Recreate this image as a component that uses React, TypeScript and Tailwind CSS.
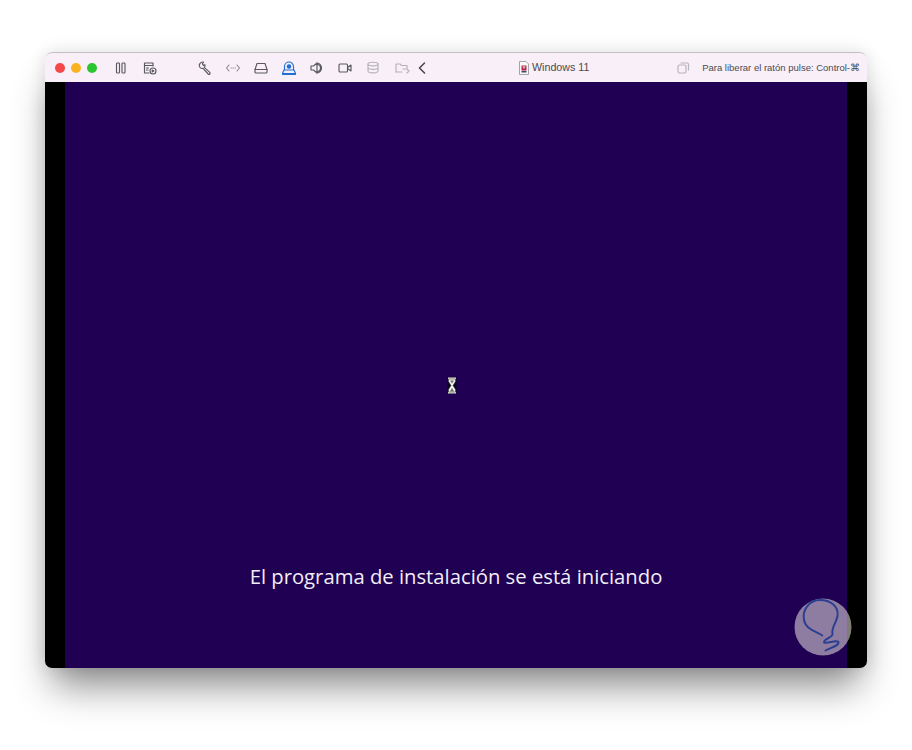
import React from "react";

const Icon = ({ className = "", children, c = "#5a5a5e" }: { className?: string; children: React.ReactNode; c?: string }) => (
  <svg width={16} height={16} viewBox="0 0 16 16" fill="none" stroke={c} strokeWidth={1.15} strokeLinecap="round" strokeLinejoin="round" className={`shrink-0 ${className}`}>
    {children}
  </svg>
);

export default function App() {
  return (
    <div className="w-[912px] h-[750px] bg-white pl-[45px] pt-[52px] overflow-hidden font-['Liberation_Sans',sans-serif]">
      <div className="relative w-[822px] h-[616px] rounded-[7px] shadow-[0_26px_36px_-8px_rgba(0,0,0,0.45),0_0_18px_rgba(0,0,0,0.12)] flex flex-col overflow-hidden">
        <div className="h-[30px] shrink-0 bg-[#f8eff8] border-t border-[#c2bfc2] rounded-t-[7px] flex items-center pl-[10px] pr-[7px]">
          <div className="flex gap-[6px]">
            <span className="w-[10px] h-[10px] rounded-full bg-[#f4484a]" />
            <span className="w-[10px] h-[10px] rounded-full bg-[#f9b320]" />
            <span className="w-[10px] h-[10px] rounded-full bg-[#2ac52f]" />
          </div>
          <div className="flex items-center gap-[13px] ml-[16px]">
            <Icon><rect x="3.5" y="3" width="3" height="10" rx="0.8" /><rect x="9" y="3" width="3" height="10" rx="0.8" /></Icon>
            <Icon><path d="M11 6V3H2.5v10H7" /><path d="M2.5 5.5H11" /><path d="M4.500 8h2M4.500 10h1.500" /><circle cx="11" cy="11" r="3" /><path d="M10.200 10l1.600 1-1.600 1z" fill="#5a5a5e" /></Icon>
          </div>
          <div className="flex items-center gap-[12px] ml-[39px]">
            <Icon><path d="M3 3.500a3 3 0 0 1 3.600-1.300L5.300 3.800l1 1.600 1.700-.6a3 3 0 0 1-.8 2.600l5.600 5a1.100 1.100 0 0 1-1.600 1.600L6 8.400a3 3 0 0 1-3-4.900z" /></Icon>
            <Icon c="#8c8a8e"><path d="M4 5 1.500 8 4 11M12 5l2.500 3L12 11" /><path d="M6 8h.4M8 8h.4M10 8h.4" /></Icon>
            <Icon><path d="M4 3.500h8l2 6v2.500a1 1 0 0 1-1 1H3a1 1 0 0 1-1-1V9.500z" /><path d="M2 9.500h12" /></Icon>
            <Icon c="#1f6fd6"><path d="M3.500 9.500V6.500a4.500 4.500 0 0 1 9 0v3" /><circle cx="8" cy="6.500" r="1.700" fill="#1f6fd6" /><path d="M3 10h10l1.500 3.500h-13z" /><path d="M1.500 14.500h13" /></Icon>
            <Icon><path d="M2 6v4h2.500L8 13V3L4.500 6z" /><path d="M8 4.500a3.500 3.500 0 0 1 0 7M8 3a5 5 0 0 1 4.500 5A5 5 0 0 1 8 13" /></Icon>
            <Icon><rect x="2" y="4" width="8.500" height="8" rx="1" /><path d="m10.500 7.500 3.500-2.500v6l-3.500-2.500" /></Icon>
            <Icon c="#b5b3b7"><ellipse cx="8" cy="4" rx="5" ry="1.800" /><path d="M3 4v7c0 1 2.200 1.800 5 1.800s5-.8 5-1.800V4M3 7.500c0 1 2.200 1.800 5 1.800s5-.8 5-1.800" /></Icon>
            <Icon c="#b5b3b7" className="ml-[1px]"><path d="M2 12V4h4l1.500 1.500H13V8" /><path d="M2 12h6" /><path d="M9 9h4l2 2-2 2" /></Icon>
          </div>
          <Icon c="#444448" className="ml-[4px]"><path d="M10.500 3 5.500 8l5 5" strokeWidth={1.500} /></Icon>
          <div className="flex items-center gap-[3px] ml-[89px]">
            <svg width="10" height="14" viewBox="0 0 10 14" className="shrink-0">
              <path d="M.5.5h6.500l2.500 2.500v10.500H.5z" fill="#fafafa" stroke="#8f8f94" strokeWidth="0.8" />
              <rect x="2.500" y="4.500" width="5" height="5" fill="#b32240" />
              <path d="M3.500 6h3M5 5v3" stroke="#e6e6f2" strokeWidth="0.8" />
              <rect x="2.500" y="10" width="5" height="1.500" fill="#41456b" />
            </svg>
            <span className="text-[10.700px] leading-[15px] text-[#4a4a4e]">Windows 11</span>
          </div>
          <div className="flex items-center gap-[11px] ml-auto">
            <Icon c="#b5b3b7"><rect x="3" y="5" width="8" height="8" rx="1.500" /><path d="M6 3h6a1.500 1.500 0 0 1 1.500 1.500V10" /></Icon>
            <span className="text-[9.500px] leading-[14px] text-[#4a4a4e] whitespace-nowrap">Para liberar el ratón pulse: Control-⌘</span>
          </div>
        </div>
        <div className="flex-1 bg-black px-[20px] flex">
          <div className="flex-1 bg-[#1f0053] flex flex-col items-center">
            <svg width="10" height="17" viewBox="0 0 10 17" className="mt-[295px] mr-[8px]">
              <rect x="0.500" y="0" width="9" height="17" fill="#0c0420" />
              <path d="M1 .5h8v1.500H1zM1 15h8v1.500H1z" fill="#e4e4dc" />
              <path d="M1.500 2h7v2.500L6 8.500l2.500 4V15h-7v-2.500L4 8.500l-2.500-4z" fill="#f4f4ee" stroke="#333" strokeWidth="0.5" />
              <path d="M3 3.500h4L5 6.500zM2.800 14.500 5 11l2.200 3.500z" fill="#6f6f64" />
            </svg>
            <p className="mt-[169px] text-[20.250px] leading-[26px] text-[#f2eef8] font-['Open_Sans',sans-serif] whitespace-nowrap">El programa de instalación se está iniciando</p>
          </div>
        </div>
        <svg width="58" height="58" viewBox="0 0 58 58" className="absolute left-[749px] top-[546px]">
          <circle cx="29" cy="29" r="28.500" fill="#fffaf0" fillOpacity="0.5" />
          <path d="M28.300 37.500C22 33 12 32 10 22 8 11 16 2 26 2c10 0 19 6 17.500 16C42 26 37 30 38.500 36 39 39 30 41 30 44c0 3 14-3 14.500 0 .5 4-8.500 6-13 8.500" fill="none" stroke="#2a3f92" strokeWidth="2" strokeLinecap="round" strokeLinejoin="round" />
        </svg>
      </div>
    </div>
  );
}
